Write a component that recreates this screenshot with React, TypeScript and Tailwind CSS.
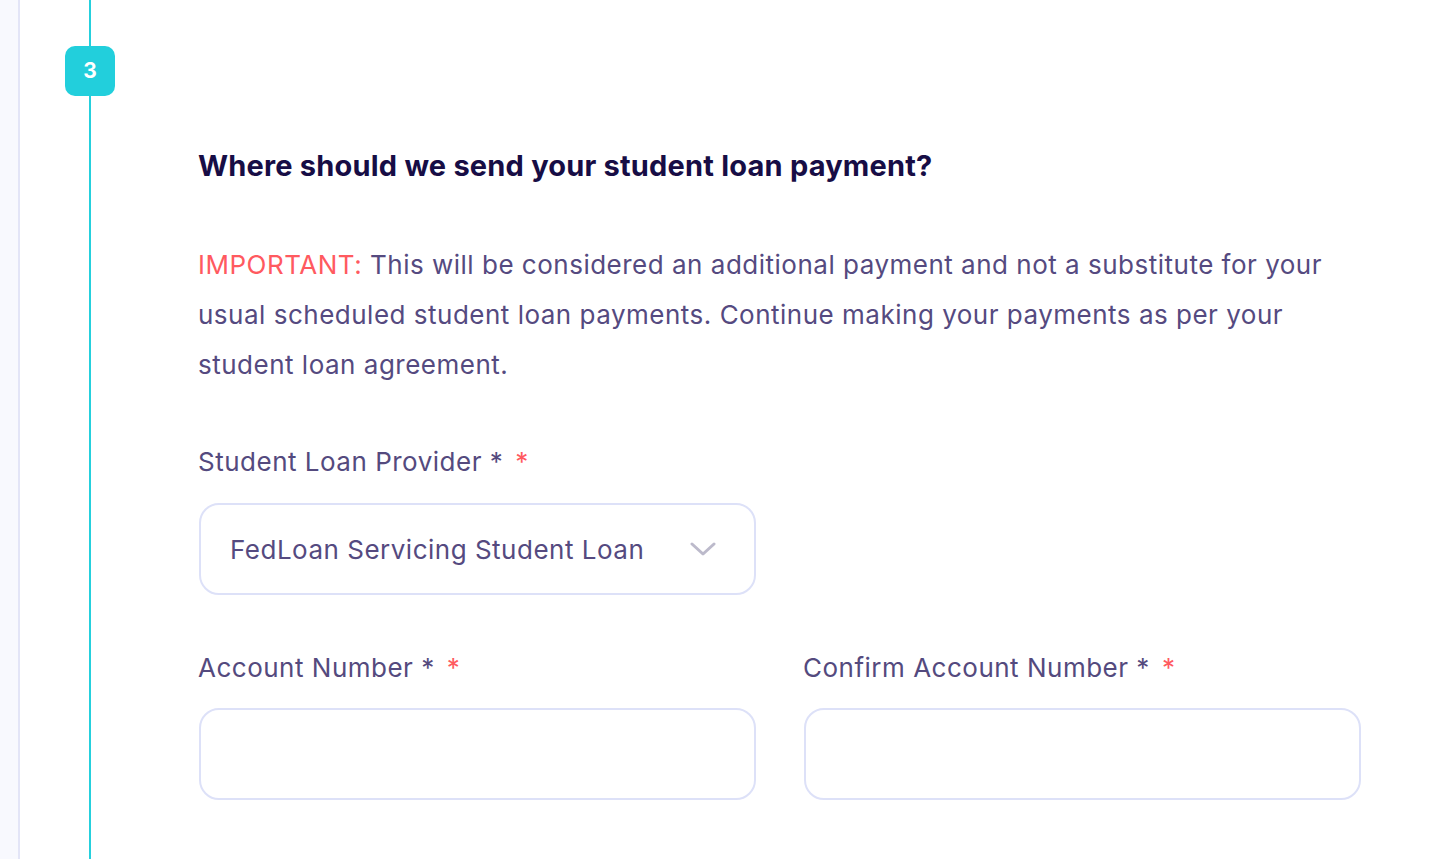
import React from "react";

const font = { fontFamily: "Inter, 'Noto Sans', sans-serif" };

function Label({ text }: { text: string }) {
  return (
    <div className="text-[26px] leading-[32px] tracking-[0.5px] text-[#544a7e]">
      {text} *<span className="ml-[12px] text-[#ff5a5f]">*</span>
    </div>
  );
}

export default function App() {
  return (
    <div className="flex h-[859px] w-full overflow-hidden bg-white" style={font}>
      <div className="w-[20px] shrink-0 border-r-2 border-[#e3e5f7] bg-[#f8f9fe]" />
      <div className="flex w-[179px] shrink-0 flex-col items-start pl-[45px]">
        <div className="ml-[24px] h-[46px] w-[2px] bg-[#25d0dd]" />
        <div className="flex h-[50px] w-[50px] items-center justify-center rounded-[10px] bg-[#22cfdc] text-[21px] font-bold text-white">
          3
        </div>
        <div className="ml-[24px] w-[2px] flex-1 bg-[#25d0dd]" />
      </div>
      <div className="flex w-[1162px] shrink-0 flex-col pt-[148px]">
        <h2 className="-ml-px text-[29px] font-bold leading-[36px] tracking-[0.2px] text-[#170d45]">
          Where should we send your student loan payment?
        </h2>
        <p className="-ml-px mt-[56px] text-[26px] leading-[50px] tracking-[0.5px] text-[#554a80]">
          <span className="text-[#ff5a5f]">IMPORTANT:</span> This will be considered an additional payment and not a substitute for your usual scheduled student loan payments. Continue making your payments as per your student loan agreement.
        </p>
        <div className="-ml-px mt-[56px]">
          <Label text="Student Loan Provider" />
        </div>
        <div className="mt-[25px] flex h-[92px] w-[557px] items-center justify-between rounded-[20px] border-2 border-[#dde1f8] pl-[29px] pr-[38px]">
          <span className="text-[26px] tracking-[0.5px] text-[#554a80]">FedLoan Servicing Student Loan</span>
          <svg width="26" height="14" viewBox="0 0 26 14" fill="none">
            <path d="M2 2l11 10L24 2" stroke="#bcbacb" strokeWidth="3" strokeLinecap="round" strokeLinejoin="round" />
          </svg>
        </div>
        <div className="mt-[57px] grid grid-cols-2 gap-x-[48px]">
          <div className="flex flex-col">
            <div className="-ml-px">
              <Label text="Account Number" />
            </div>
            <div className="mt-[24px] h-[92px] rounded-[20px] border-2 border-[#dde1f8]" />
          </div>
          <div className="flex flex-col">
            <div className="-ml-px">
              <Label text="Confirm Account Number" />
            </div>
            <div className="mt-[24px] h-[92px] rounded-[20px] border-2 border-[#dde1f8]" />
          </div>
        </div>
      </div>
    </div>
  );
}
